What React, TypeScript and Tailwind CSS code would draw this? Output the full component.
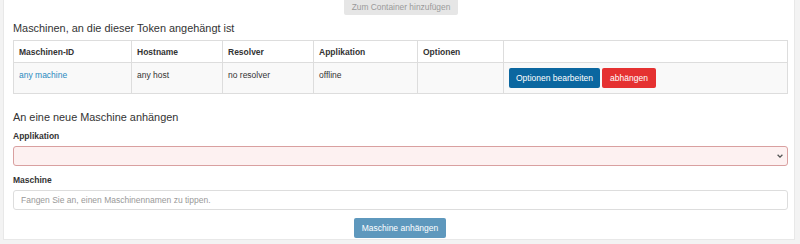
export default function App() {
  return (
    <div className="w-[800px] h-[244px] bg-[#f3f3f3] pl-[3px] pr-[5px] pb-[4px] font-['Liberation_Sans',Arial,sans-serif] text-[#333] overflow-hidden">
      <div className="h-full bg-white border border-t-0 border-[#e8e8e8] px-[9px]">
        <div className="flex justify-center">
          <button
            disabled
            className="h-[15px] w-[114px] ml-[4px] bg-[#e6e6e6] text-[#9a9a9a] text-[8.4px] leading-[13px] rounded-b-[2px]"
          >
            Zum Container hinzufügen
          </button>
        </div>

        <h4 className="mt-[6px] h-[14px] text-[10.9px] leading-[14px]">
          Maschinen, an die dieser Token angehängt ist
        </h4>

        <table className="mt-[5px] w-[775px] border-collapse border border-[#ddd] text-[8.5px] leading-[12px] table-fixed">
          <thead>
            <tr className="h-[22px] text-left">
              <th className="w-[118px] border border-[#ddd] px-[5px] font-bold">Maschinen-ID</th>
              <th className="w-[91px] border border-[#ddd] px-[5px] font-bold">Hostname</th>
              <th className="w-[91px] border border-[#ddd] px-[5px] font-bold">Resolver</th>
              <th className="w-[104px] border border-[#ddd] px-[5px] font-bold">Applikation</th>
              <th className="w-[86px] border border-[#ddd] px-[5px] font-bold">Optionen</th>
              <th className="border border-[#ddd]"></th>
            </tr>
          </thead>
          <tbody>
            <tr className="h-[31px] bg-[#f9f9f9] align-top">
              <td className="border border-[#ddd] px-[5px] pt-[6px]">
                <a className="text-[#2a8ac0]">any machine</a>
              </td>
              <td className="border border-[#ddd] px-[5px] pt-[6px]">any host</td>
              <td className="border border-[#ddd] px-[5px] pt-[6px]">no resolver</td>
              <td className="border border-[#ddd] px-[5px] pt-[6px]">offline</td>
              <td className="border border-[#ddd]"></td>
              <td className="border border-[#ddd] px-[5px] pt-[5px]">
                <div className="flex gap-[2px]">
                  <button className="h-[20px] w-[91px] rounded-[2px] bg-[#0b67a0] text-white text-[8.5px]">
                    Optionen bearbeiten
                  </button>
                  <button className="h-[20px] w-[54px] rounded-[2px] bg-[#e53131] text-white text-[8.5px]">
                    abhängen
                  </button>
                </div>
              </td>
            </tr>
          </tbody>
        </table>

        <h4 className="mt-[16px] h-[14px] text-[10.9px] leading-[14px]">An eine neue Maschine anhängen</h4>

        <div className="mt-[6px] h-[12px] text-[8.5px] leading-[12px] font-bold">Applikation</div>
        <div className="relative mt-[4px] w-[775px] h-[20px]">
          <select className="block w-full h-[20px] appearance-none rounded-[3px] border border-[#d9a0a0] bg-[#fdf1f1] text-[8.5px] px-[6px]"></select>
          <svg
            className="absolute right-[5px] top-[8px] w-[6px] h-[4px]"
            viewBox="0 0 6 4"
            fill="none"
            stroke="#555"
            strokeWidth="1.3"
          >
            <path d="M0.6 0.7 L3 3.1 L5.4 0.7" />
          </svg>
        </div>

        <div className="mt-[8px] h-[12px] text-[8.5px] leading-[12px] font-bold">Maschine</div>
        <input
          className="block mt-[4px] w-[775px] h-[20px] rounded-[3px] border border-[#ddd] bg-white text-[8.5px] px-[7px] placeholder:text-[#999] outline-none"
          placeholder="Fangen Sie an, einen Maschinennamen zu tippen."
        />

        <div className="mt-[8px] flex justify-center">
          <button className="h-[20px] w-[92px] ml-[2px] rounded-[2px] bg-[#5e98bd] text-white text-[8.5px]">
            Maschine anhängen
          </button>
        </div>
      </div>
    </div>
  );
}
